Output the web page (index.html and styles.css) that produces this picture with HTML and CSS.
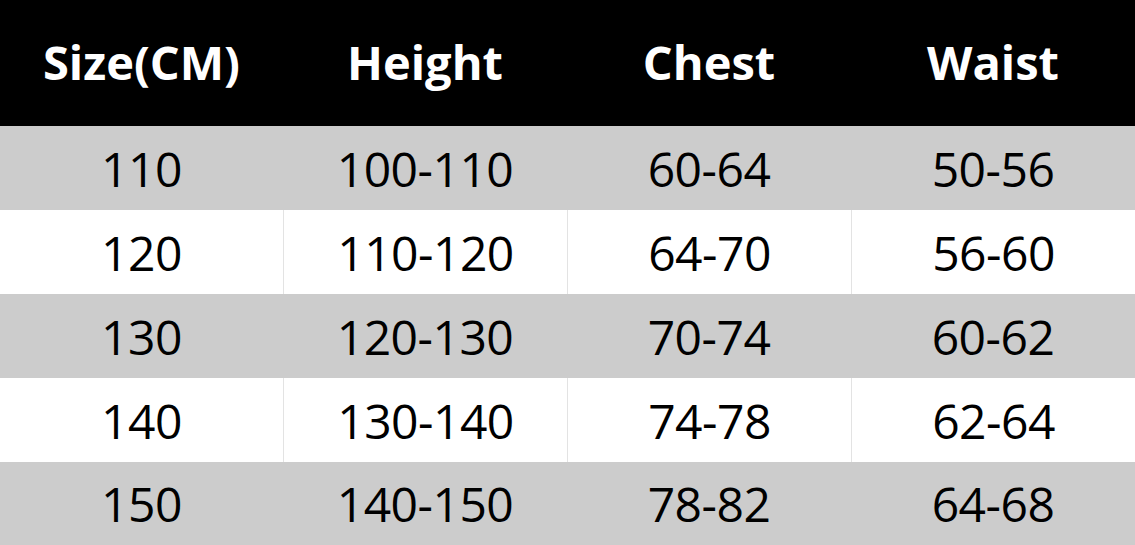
FILE: index.html
```html
<!DOCTYPE html>
<html>
<head>
<meta charset="utf-8">
<link rel="stylesheet" href="styles.css">
</head>
<body>
<div class="table">
  <div class="row head"><div class="cell">Size(CM)</div><div class="cell">Height</div><div class="cell">Chest</div><div class="cell">Waist</div></div>
  <div class="row gray"><div class="cell">110</div><div class="cell">100-110</div><div class="cell">60-64</div><div class="cell">50-56</div></div>
  <div class="row white"><div class="cell">120</div><div class="cell">110-120</div><div class="cell">64-70</div><div class="cell">56-60</div></div>
  <div class="row gray"><div class="cell">130</div><div class="cell">120-130</div><div class="cell">70-74</div><div class="cell">60-62</div></div>
  <div class="row white"><div class="cell">140</div><div class="cell">130-140</div><div class="cell">74-78</div><div class="cell">62-64</div></div>
  <div class="row gray last"><div class="cell">150</div><div class="cell">140-150</div><div class="cell">78-82</div><div class="cell">64-68</div></div>
</div>
</body>
</html>
```
FILE: styles.css
```css
html, body { margin: 0; padding: 0; background: #fff; }
.table {
  width: 1135px;
  height: 545px;
  display: flex;
  flex-direction: column;
  font-family: "Open Sans", "Noto Sans", sans-serif;
  color: #000;
}
.row {
  display: grid;
  grid-template-columns: 283px 284px 284px 284px;
  height: 84px;
}
.row.last { height: 83px; }
.cell {
  display: flex;
  align-items: center;
  justify-content: center;
  font-size: 48px;
  letter-spacing: -0.5px;
}
.head { height: 126px; background: #000; color: #fff; }
.head .cell { font-weight: 700; font-size: 47px; letter-spacing: 0; padding-bottom: 2px; }
.gray { background: #cccccc; }
.white .cell + .cell { border-left: 1px solid #e3e3e3; }
```
